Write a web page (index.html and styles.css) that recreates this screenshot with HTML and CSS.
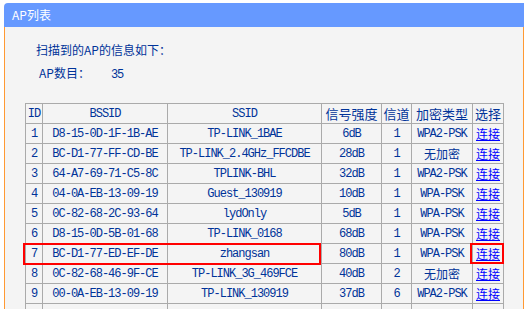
FILE: index.html
```html
<!DOCTYPE html>
<html>
<head>
<meta charset="utf-8">
<title>AP列表</title>
<link rel="stylesheet" href="styles.css">
</head>
<body>
<div class="panel">
  <div class="title">AP列表</div>
  <div class="content">
    <div class="heading">扫描到的AP的信息如下：</div>
    <div class="count"><span>AP数目：</span><span class="num">35</span></div>
    <div class="tablewrap">
      <table class="ap">
        <colgroup>
          <col class="c-id"><col class="c-bssid"><col class="c-ssid"><col class="c-sig"><col class="c-ch"><col class="c-enc"><col class="c-sel">
        </colgroup>
        <thead>
          <tr><th class="m">ID</th><th class="m">BSSID</th><th class="m">SSID</th><th>信号强度</th><th>信道</th><th>加密类型</th><th>选择</th></tr>
        </thead>
        <tbody>
          <tr><td class="m">1</td><td class="m">D8-15-0D-1F-1B-AE</td><td class="m">TP-LINK_1BAE</td><td class="m">6dB</td><td class="m">1</td><td class="m">WPA2-PSK</td><td><a href="#">连接</a></td></tr>
          <tr><td class="m">2</td><td class="m">BC-D1-77-FF-CD-BE</td><td class="m">TP-LINK_2.4GHz_FFCDBE</td><td class="m">28dB</td><td class="m">1</td><td>无加密</td><td><a href="#">连接</a></td></tr>
          <tr><td class="m">3</td><td class="m">64-A7-69-71-C5-8C</td><td class="m">TPLINK-BHL</td><td class="m">32dB</td><td class="m">1</td><td class="m">WPA2-PSK</td><td><a href="#">连接</a></td></tr>
          <tr><td class="m">4</td><td class="m">04-0A-EB-13-09-19</td><td class="m">Guest_130919</td><td class="m">10dB</td><td class="m">1</td><td class="m">WPA-PSK</td><td><a href="#">连接</a></td></tr>
          <tr><td class="m">5</td><td class="m">0C-82-68-2C-93-64</td><td class="m">lydOnly</td><td class="m">5dB</td><td class="m">1</td><td class="m">WPA-PSK</td><td><a href="#">连接</a></td></tr>
          <tr><td class="m">6</td><td class="m">D8-15-0D-5B-01-68</td><td class="m">TP-LINK_0168</td><td class="m">68dB</td><td class="m">1</td><td class="m">WPA-PSK</td><td><a href="#">连接</a></td></tr>
          <tr><td class="m">7</td><td class="m">BC-D1-77-ED-EF-DE</td><td class="m">zhangsan</td><td class="m">80dB</td><td class="m">1</td><td class="m">WPA-PSK</td><td><a href="#">连接</a></td></tr>
          <tr><td class="m">8</td><td class="m">0C-82-68-46-9F-CE</td><td class="m">TP-LINK_3G_469FCE</td><td class="m">40dB</td><td class="m">2</td><td>无加密</td><td><a href="#">连接</a></td></tr>
          <tr><td class="m">9</td><td class="m">00-0A-EB-13-09-19</td><td class="m">TP-LINK_130919</td><td class="m">37dB</td><td class="m">6</td><td class="m">WPA2-PSK</td><td><a href="#">连接</a></td></tr>
          <tr><td>&nbsp;</td><td></td><td></td><td></td><td></td><td></td><td></td></tr>
        </tbody>
      </table>
      <div class="mark mark-row"></div>
      <div class="mark mark-link"></div>
    </div>
  </div>
</div>
</body>
</html>
```

FILE: styles.css
```css
html, body {
  margin: 0;
  padding: 0;
  background: #ffffff;
}
body {
  font-family: "Noto Sans CJK SC", "DejaVu Sans", sans-serif;
  font-size: 12px;
  color: #003399;
}
.panel {
  margin: 3px 0 0 4px;
  width: 520px;
}
.title {
  height: 24px;
  line-height: 24px;
  background: #6699ff;
  color: #ffffff;
  padding-left: 8px;
  border-top-left-radius: 4px;
  font-size: 12px;
}
.content {
  background: #f4f4f4;
  border-left: 1px solid #ff9933;
  border-right: 1px solid #ff9933;
  padding: 15px 0 20px 20px;
}
.heading {
  margin-left: 11px;
  line-height: 16px;
  font-size: 12px;
}
.count {
  margin: 7px 0 0 14px;
  line-height: 16px;
  font-size: 12px;
}
.count .num {
  margin-left: 21px;
  font-family: "Liberation Mono", monospace;
  font-size: 12px;
  letter-spacing: -1px;
}
.tablewrap {
  position: relative;
  margin-top: 20px;
  width: 479px;
}
table.ap {
  border-collapse: collapse;
  table-layout: fixed;
  width: 479px;
}
.c-id { width: 17px; }
.c-bssid { width: 125px; }
.c-ssid { width: 154px; }
.c-sig { width: 60px; }
.c-ch { width: 30px; }
.c-enc { width: 61px; }
.c-sel { width: 31px; }
.ap th, .ap td {
  border: 1px solid #aaaaaa;
  height: 19px;
  padding: 0;
  text-align: center;
  font-weight: normal;
  white-space: nowrap;
  overflow: hidden;
  font-size: 12px;
  line-height: 16px;
}
.ap th {
  font-size: 13px;
}
.ap .m {
  font-family: "Liberation Mono", "Noto Sans CJK SC", monospace;
  font-size: 12px;
  letter-spacing: -1px;
}
.ap a {
  color: #0000ff;
  text-decoration: underline;
}
.mark {
  position: absolute;
  box-sizing: border-box;
  border: 2px solid #ff0000;
}
.mark-row {
  left: -2px;
  top: 140px;
  width: 298px;
  height: 22px;
}
.mark-link {
  left: 445px;
  top: 140px;
  width: 34px;
  height: 21px;
}
```
